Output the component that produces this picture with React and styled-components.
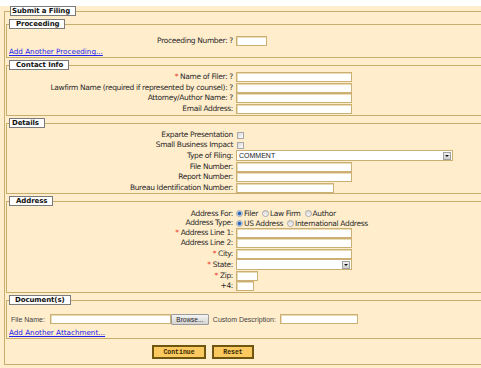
import React from 'react'
import styled, { createGlobalStyle } from 'styled-components'

const tan = '#c9ad6c'
const beige = '#ffedcb'

const GlobalStyle = createGlobalStyle`
  html, body {
    margin: 0;
    padding: 0;
    background: #fff;
    overflow: hidden;
  }
  body {
    font-family: "DejaVu Sans", Verdana, sans-serif;
    color: #2b2b2b;
  }
`

const Page = styled.div`
  margin-top: 6px;
  background: ${beige};
  width: 481px;
  min-height: 362px;
  padding-left: 4px;
  box-sizing: border-box;
  overflow: hidden;
`

const Outer = styled.fieldset`
  margin: 0;
  padding: 3px 0 5px 1px;
  border: 1px solid ${tan};
  border-right: none;
  width: 477px;
  box-sizing: border-box;
  min-inline-size: 0;
`

const Legend = styled.legend`
  margin-left: ${p => p.$ml ?? 1}px;
  padding: 0 5px 0 ${p => p.$pl ?? 6}px;
  height: 10px;
  line-height: 9px;
  box-sizing: border-box;
  background: #fff;
  border: 1px solid #7b7b7b;
  font-size: 7px;
  font-weight: bold;
  letter-spacing: -0.1px;
  color: #111;
  white-space: nowrap;
`

const Section = styled.fieldset`
  margin: ${p => (p.$first ? 0 : 2)}px 0 0 0;
  padding: ${p => p.$pt}px 0 ${p => p.$pb}px 1px;
  border: 1px solid ${tan};
  border-right: none;
  min-inline-size: 0;
`

const Rows = styled.div`
  display: flex;
  flex-direction: column;
  gap: 0.5px;
`

const Row = styled.div`
  display: grid;
  grid-template-columns: 225px auto;
  column-gap: 3px;
  align-items: center;
  height: ${p => p.$h || 10}px;
`

const Label = styled.span`
  text-align: right;
  font-size: 7.5px;
  letter-spacing: -0.35px;
  line-height: 10px;
  white-space: nowrap;
  color: #2b2b2b;
`

const Req = styled.span`
  color: #f03a2a;
`

const Field = styled.input`
  display: block;
  width: ${p => p.$w}px;
  height: 10px;
  box-sizing: border-box;
  margin: 0;
  padding: 0;
  border: 1px solid #ccb073;
  box-shadow: inset 1px 1px 0 #e9dbb5;
  background: #fff;
  outline: none;
`

const Check = styled.span`
  display: block;
  width: 7px;
  height: 7px;
  box-sizing: border-box;
  margin-left: 1px;
  border: 1px solid #a8a8a8;
  background: linear-gradient(135deg, #d9d9d9, #fdfdfd);
`

const Select = styled.div`
  display: flex;
  align-items: center;
  width: ${p => p.$w}px;
  height: 11px;
  box-sizing: border-box;
  border: 1px solid #ccb073;
  background: #fff;
  padding-left: 2px;
  font-family: "Liberation Sans", Arial, sans-serif;
  font-size: 7px;
  color: #222;
`

const SelectText = styled.span`
  flex: 1;
  line-height: 9px;
`

const Arrow = styled.span`
  width: 8px;
  height: 8px;
  margin-right: 1px;
  box-sizing: border-box;
  border: 1px solid #a0a0a0;
  background: linear-gradient(#f0f0f0, #cfcfcf);
  display: flex;
  align-items: center;
  justify-content: center;
  &::after {
    content: '';
    border-left: 2px solid transparent;
    border-right: 2px solid transparent;
    border-top: 2px solid #111;
  }
`

const Radios = styled.div`
  display: flex;
  align-items: center;
  gap: 4px;
`

const Option = styled.span`
  display: flex;
  align-items: center;
  gap: 1px;
  font-size: 7.5px;
  letter-spacing: -0.35px;
  line-height: 9px;
  white-space: nowrap;
  color: #2b2b2b;
`

const Radio = styled.span`
  display: block;
  width: 7px;
  height: 7px;
  box-sizing: border-box;
  border-radius: 50%;
  border: 1px solid #a9a9a9;
  background: ${p =>
    p.$checked
      ? 'radial-gradient(circle, #2c66b2 0 1.3px, #8fb6e0 2px, #eef2f6 2.6px)'
      : 'linear-gradient(#d6d6d6, #f8f8f8)'};
`

const Link = styled.a`
  display: block;
  margin-left: 1px;
  margin-top: ${p => p.$mt || 0}px;
  font-size: 7.2px;
  line-height: ${p => p.$lh || 10}px;
  color: #2222ee;
  text-decoration: underline;
  white-space: nowrap;
`

const DocRow = styled.div`
  display: flex;
  align-items: center;
  height: 11px;
  padding-left: 3px;
  font-family: "Liberation Sans", Arial, sans-serif;
  font-size: 7px;
  color: #444;
  white-space: nowrap;
`

const DocText = styled.span`
  margin-right: ${p => p.$mr}px;
`

const Browse = styled.button`
  width: 38px;
  height: 11px;
  margin: 0 4px 0 0;
  padding: 0;
  box-sizing: border-box;
  border: 1px solid #9c9c9c;
  border-radius: 1px;
  background: linear-gradient(#f4f4f4, #d2d2d2);
  font-family: "Liberation Sans", Arial, sans-serif;
  font-size: 6.5px;
  line-height: 9px;
  color: #222;
`

const Actions = styled.div`
  display: flex;
  gap: 6px;
  margin-top: 6px;
  padding-left: 146px;
`

const Action = styled.button`
  width: ${p => p.$w}px;
  height: 14px;
  margin: 0;
  padding: 0;
  box-sizing: border-box;
  border: 2px solid #6f5510;
  background: #fcc961;
  font-family: "Liberation Mono", "Courier New", monospace;
  font-size: 6.5px;
  font-weight: bold;
  color: #3a2a00;
`

const contactRows = [
  { req: true, text: 'Name of Filer: ?' },
  { text: 'Lawfirm Name (required if represented by counsel): ?' },
  { text: 'Attorney/Author Name: ?' },
  { text: 'Email Address:' },
]

const App = () => {
  return (
    <Page>
      <GlobalStyle />
      <Outer>
        <Legend $ml={4} $pl={1}>Submit a Filing</Legend>

        <Section $first $pt={7} $pb={0}>
          <Legend>Proceeding</Legend>
          <Row>
            <Label>Proceeding Number: ?</Label>
            <Field $w={31} />
          </Row>
          <Link $lh={11}>Add Another Proceeding...</Link>
        </Section>

        <Section $pt={2} $pb={1.5}>
          <Legend>Contact Info</Legend>
          <Rows>
            {contactRows.map((r, i) => (
              <Row key={i}>
                <Label>
                  {r.req && <Req>* </Req>}
                  {r.text}
                </Label>
                <Field $w={116} />
              </Row>
            ))}
          </Rows>
        </Section>

        <Section $pt={2} $pb={0.5}>
          <Legend $pl={2}>Details</Legend>
          <Rows>
            <Row $h={9.5}>
              <Label>Exparte Presentation</Label>
              <Check />
            </Row>
            <Row $h={9.5}>
              <Label>Small Business Impact</Label>
              <Check />
            </Row>
            <Row $h={11}>
              <Label>Type of Filing:</Label>
              <Select $w={217}>
                <SelectText>COMMENT</SelectText>
                <Arrow />
              </Select>
            </Row>
            <Row>
              <Label>File Number:</Label>
              <Field $w={116} />
            </Row>
            <Row>
              <Label>Report Number:</Label>
              <Field $w={116} />
            </Row>
            <Row>
              <Label>Bureau Identification Number:</Label>
              <Field $w={98} />
            </Row>
          </Rows>
        </Section>

        <Section $pt={2.5} $pb={1}>
          <Legend>Address</Legend>
          <Rows>
            <Row $h={9}>
              <Label>Address For:</Label>
              <Radios>
                <Option><Radio $checked />Filer</Option>
                <Option><Radio />Law Firm</Option>
                <Option><Radio />Author</Option>
              </Radios>
            </Row>
            <Row $h={9}>
              <Label>Address Type:</Label>
              <Radios>
                <Option><Radio $checked />US Address</Option>
                <Option><Radio />International Address</Option>
              </Radios>
            </Row>
            <Row>
              <Label><Req>* </Req>Address Line 1:</Label>
              <Field $w={116} />
            </Row>
            <Row>
              <Label>Address Line 2:</Label>
              <Field $w={116} />
            </Row>
            <Row>
              <Label><Req>* </Req>City:</Label>
              <Field $w={116} />
            </Row>
            <Row $h={11}>
              <Label><Req>* </Req>State:</Label>
              <Select $w={116}>
                <SelectText />
                <Arrow />
              </Select>
            </Row>
            <Row>
              <Label><Req>* </Req>Zip:</Label>
              <Field $w={22} />
            </Row>
            <Row>
              <Label>+4:</Label>
              <Field $w={18} />
            </Row>
          </Rows>
        </Section>

        <Section $pt={8.5} $pb={0}>
          <Legend $pl={5}>Document(s)</Legend>
          <DocRow>
            <DocText $mr={5}>File Name:</DocText>
            <Field $w={121} />
            <Browse>Browse...</Browse>
            <DocText $mr={4}>Custom Description:</DocText>
            <Field $w={78} />
          </DocRow>
          <Link $mt={3.5}>Add Another Attachment...</Link>
        </Section>

        <Actions>
          <Action $w={54}>Continue</Action>
          <Action $w={42}>Reset</Action>
        </Actions>
      </Outer>
    </Page>
  )
}

export default App
